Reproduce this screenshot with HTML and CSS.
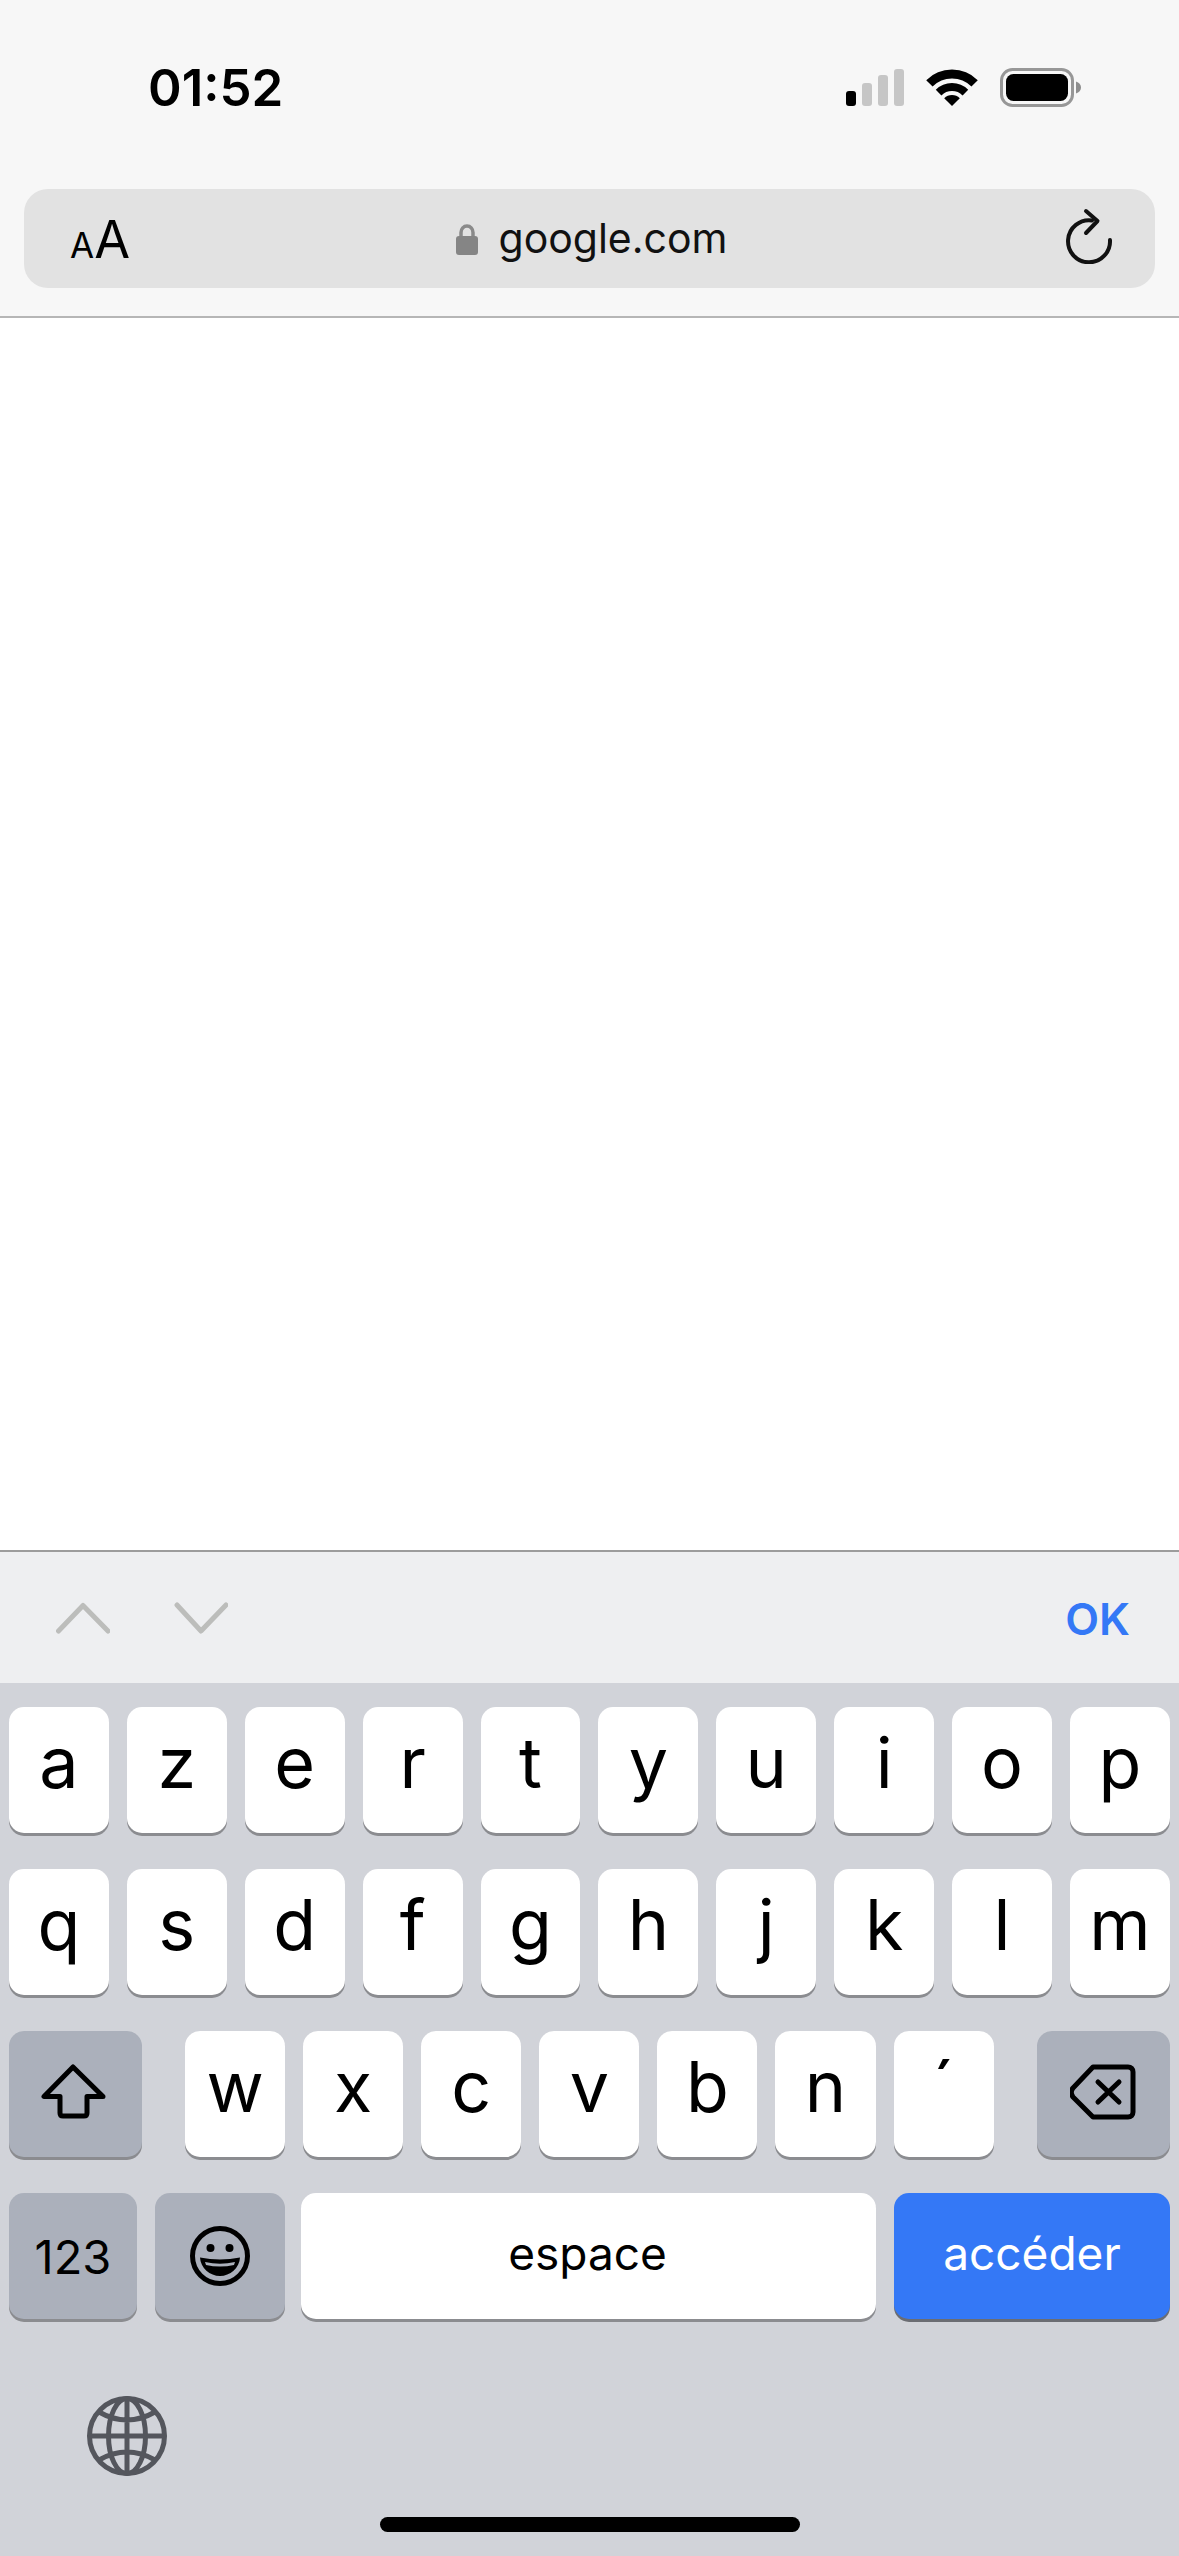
FILE: index.html
```html
<!DOCTYPE html>
<html lang="fr">
<head>
<meta charset="utf-8">
<title>google.com</title>
<link rel="stylesheet" href="styles.css">
</head>
<body>
<div class="phone">
  <header class="top">
    <div class="status">
      <span class="time">01:52</span>
      <div class="status-icons">
        <div class="signal"><i class="bar b1 on"></i><i class="bar b2"></i><i class="bar b3"></i><i class="bar b4"></i></div>
        <svg class="wifi" width="52" height="37" viewBox="0 0 52 37"><path class="wifi-arc" d="M3.400 14.400A32 32 0 0 1 48.600 14.400"/><path class="wifi-arc mid" d="M12.600 23.600A19 19 0 0 1 39.400 23.600"/><path class="wifi-fill" d="M26 37L18.200 29.200A11 11 0 0 1 33.800 29.200Z"/></svg>
        <svg class="battery" width="81" height="39" viewBox="0 0 81 39"><rect class="bat-shell" x="1.500" y="1.500" width="71" height="36" rx="11"/><rect class="bat-fill" x="6" y="6" width="62" height="27" rx="7.500"/><path class="bat-nub" d="M76 13.500C79 14.500 81 16.500 81 19.500S79 24.500 76 25.500Z"/></svg>
      </div>
    </div>
    <div class="urlbar">
      <span class="aa"><span class="aa-small">A</span><span class="aa-big">A</span></span>
      <div class="url">
        <svg class="lock" width="22" height="32" viewBox="0 0 22 32"><path class="lock-shackle" d="M5 15V9.500A6 6.500 0 0 1 17 9.500V15"/><rect class="lock-body" x="0" y="13" width="22" height="19" rx="3"/></svg>
        <span class="domain">google.com</span>
      </div>
      <svg class="reload" width="50" height="56" viewBox="0 0 50 56"><path class="reload-line" d="M45 32A21 21 0 1 1 27 12.500"/><path class="reload-line" d="M21 3L32.500 13L21 25"/></svg>
    </div>
  </header>

  <main class="content"></main>

  <div class="accessory">
    <div class="nav-arrows">
      <svg width="54" height="34" viewBox="0 0 54 34"><path class="chev" d="M2.500 30L27 4.500L52 30"/></svg>
      <svg width="54" height="34" viewBox="0 0 54 34"><path class="chev" d="M3 4L27 30L52 4"/></svg>
    </div>
    <span class="ok">OK</span>
  </div>

  <section class="keyboard">
    <div class="row">
      <span class="key">a</span><span class="key">z</span><span class="key">e</span><span class="key">r</span><span class="key">t</span><span class="key">y</span><span class="key">u</span><span class="key">i</span><span class="key">o</span><span class="key">p</span>
    </div>
    <div class="row">
      <span class="key">q</span><span class="key">s</span><span class="key">d</span><span class="key">f</span><span class="key">g</span><span class="key">h</span><span class="key">j</span><span class="key">k</span><span class="key">l</span><span class="key">m</span>
    </div>
    <div class="row row-mid">
      <span class="key dark shift"><svg width="66" height="56" viewBox="0 0 66 56"><path class="icon-line" d="M32 3L3 32.500H19V49C19 51 20 52 22 52H43C45 52 46 51 46 49V32.500H62Z"/></svg></span>
      <span class="key">w</span><span class="key">x</span><span class="key">c</span><span class="key">v</span><span class="key">b</span><span class="key">n</span><span class="key">´</span>
      <span class="key dark back"><svg width="66" height="56" viewBox="0 0 66 56"><path class="icon-line" d="M23 3H58C61 3 63 5 63 8V48C63 51 61 53 58 53H23L3 33Q-.5 28 3 24Z"/><path class="icon-line" d="M28 18L49 38M49 18L28 38"/></svg></span>
    </div>
    <div class="row">
      <span class="key dark num">123</span>
      <span class="key dark emoji"><svg width="62" height="62" viewBox="0 0 62 62"><circle class="icon-line" cx="31" cy="31" r="27.500"/><circle class="icon-solid" cx="21.500" cy="23" r="4"/><circle class="icon-solid" cx="40.500" cy="23" r="4"/><path class="icon-mouth" d="M11 32.500Q31 36.500 51 32.500C50.500 43 41 51 31 51S11.500 43 11 32.500Z"/><path class="icon-teeth" d="M16 37Q31 40.500 46 37L45 40Q31 43 17 40Z"/></svg></span>
      <span class="key space">espace</span>
      <span class="key go">accéder</span>
    </div>
    <div class="bottom">
      <svg class="globe" width="82" height="82" viewBox="0 0 82 82"><circle class="globe-line" cx="41" cy="41" r="37.500"/><ellipse class="globe-line" cx="41" cy="41" rx="18.500" ry="37.500"/><path class="globe-line" d="M41 3.500V78.500M3.500 41H78.500M13 17Q41 33 69 17M13 65Q41 49 69 65"/></svg>
    </div>
    <div class="home"></div>
  </section>
</div>
</body>
</html>
```
FILE: styles.css
```css
* { box-sizing: border-box; }
html, body { margin: 0; padding: 0; background: #fff; }
.phone {
  width: 1179px;
  height: 2556px;
  display: flex;
  flex-direction: column;
  overflow: hidden;
  font-family: Inter, "Noto Sans", sans-serif;
  color: #000;
}
.top {
  height: 318px;
  background: #f7f7f7;
  border-bottom: 2px solid #b6b6b6;
  flex: none;
}
.status {
  height: 189px;
  padding: 68px 98px 0 148px;
  display: flex;
  justify-content: space-between;
  align-items: flex-start;
}
.time {
  font-size: 51px;
  font-weight: 600;
  line-height: 40px;
}
.status-icons { display: flex; align-items: flex-start; }
.signal { display: flex; align-items: flex-end; gap: 6px; height: 38px; padding-top: 1px; }
.bar { display: block; width: 10px; border-radius: 3px; background: #c6c6c6; }
.bar.on { background: #000; }
.b1 { height: 15px; }
.b2 { height: 23px; }
.b3 { height: 31px; }
.b4 { height: 37px; }
.wifi { margin: 1px 0 0 22px; }
.wifi-arc { fill: none; stroke: #000; stroke-width: 9; }
.wifi-arc.mid { stroke-width: 8; }
.wifi-fill { fill: #000; }
.battery { margin-left: 22px; }
.bat-shell { fill: none; stroke: #979797; stroke-width: 3; }
.bat-fill { fill: #000; }
.bat-nub { fill: #8e8e8e; }
.urlbar {
  margin: 0 24px;
  height: 99px;
  background: #e2e2e2;
  border-radius: 24px;
  display: flex;
  align-items: center;
  justify-content: space-between;
  padding: 0 40px 0 46px;
  position: relative;
}
.aa { display: flex; align-items: baseline; width: 58px; font-weight: 400; line-height: 1; padding-top: 2px; }
.aa-small { font-size: 35px; }
.aa-big { font-size: 52px; letter-spacing: -1px; }
.url { display: flex; align-items: center; gap: 20px; margin-right: 9px; }
.lock-shackle { fill: none; stroke: #8a8a8a; stroke-width: 3.500; }
.lock-body { fill: #858585; }
.domain { font-size: 41px; font-weight: 400; line-height: 1; color: #111; }
.reload { margin-top: -5px; }
.reload-line { fill: none; stroke: #111; stroke-width: 4; stroke-linecap: round; stroke-linejoin: round; }
.content { flex: 1; background: #fff; }
.accessory {
  flex: none;
  height: 133px;
  background: #eeeff1;
  border-top: 2px solid #9c9c9c;
  display: flex;
  align-items: center;
  justify-content: space-between;
  padding: 0 49px 0 56px;
}
.nav-arrows { display: flex; gap: 64px; }
.chev { fill: none; stroke: #bcbdbb; stroke-width: 5; stroke-linecap: round; stroke-linejoin: round; }
.ok { font-size: 44px; font-weight: 600; line-height: 1; color: #3478f6; padding-top: 3px; }
.keyboard {
  flex: none;
  height: 873px;
  background: #d1d3d9;
  padding: 24px 9px 0;
  display: flex;
  flex-direction: column;
  gap: 36px;
  position: relative;
}
.row { display: flex; gap: 18px; height: 126px; }
.key {
  width: 99.900px;
  height: 126px;
  background: #fff;
  border-radius: 15px;
  box-shadow: 0 3px 0 #8b8c90;
  display: flex;
  align-items: center;
  justify-content: center;
  font-size: 70px;
  font-weight: 380;
  line-height: 1;
  padding-bottom: 15px;
  flex: none;
}
.row-mid .key { width: 100.100px; }
.key.dark { background: #abb0bb; padding-bottom: 0; }
.row-mid .shift { width: 133px; margin-right: 25px; }
.shift svg { margin: -4px 0 0 -3px; }
.row-mid .back { width: 133px; margin-left: 25px; }
.back svg { margin-top: -4px; }
.key.num { width: 128px; font-size: 47px; font-weight: 400; }
.key.emoji { width: 130px; }
.key.space { width: 575px; margin-left: -2px; font-size: 46px; font-weight: 400; padding: 0 2px 6px 0; }
.key.go { width: 276px; background: #3478f6; color: #fff; font-size: 46px; font-weight: 400; padding-bottom: 6px; box-shadow: 0 3px 0 #6b6d73; }
.icon-line { fill: none; stroke: #000; stroke-width: 5; stroke-linecap: round; stroke-linejoin: round; }
.icon-solid { fill: #000; }
.icon-mouth { fill: #000; }
.icon-teeth { fill: #abb0bb; }
.bottom { padding: 40px 0 0 77px; height: 130px; }
.globe { display: block; }
.globe-line { fill: none; stroke: #54565d; stroke-width: 5; }
.home {
  position: absolute;
  left: 380px;
  bottom: 24px;
  width: 420px;
  height: 15px;
  border-radius: 8px;
  background: #000;
}
```
